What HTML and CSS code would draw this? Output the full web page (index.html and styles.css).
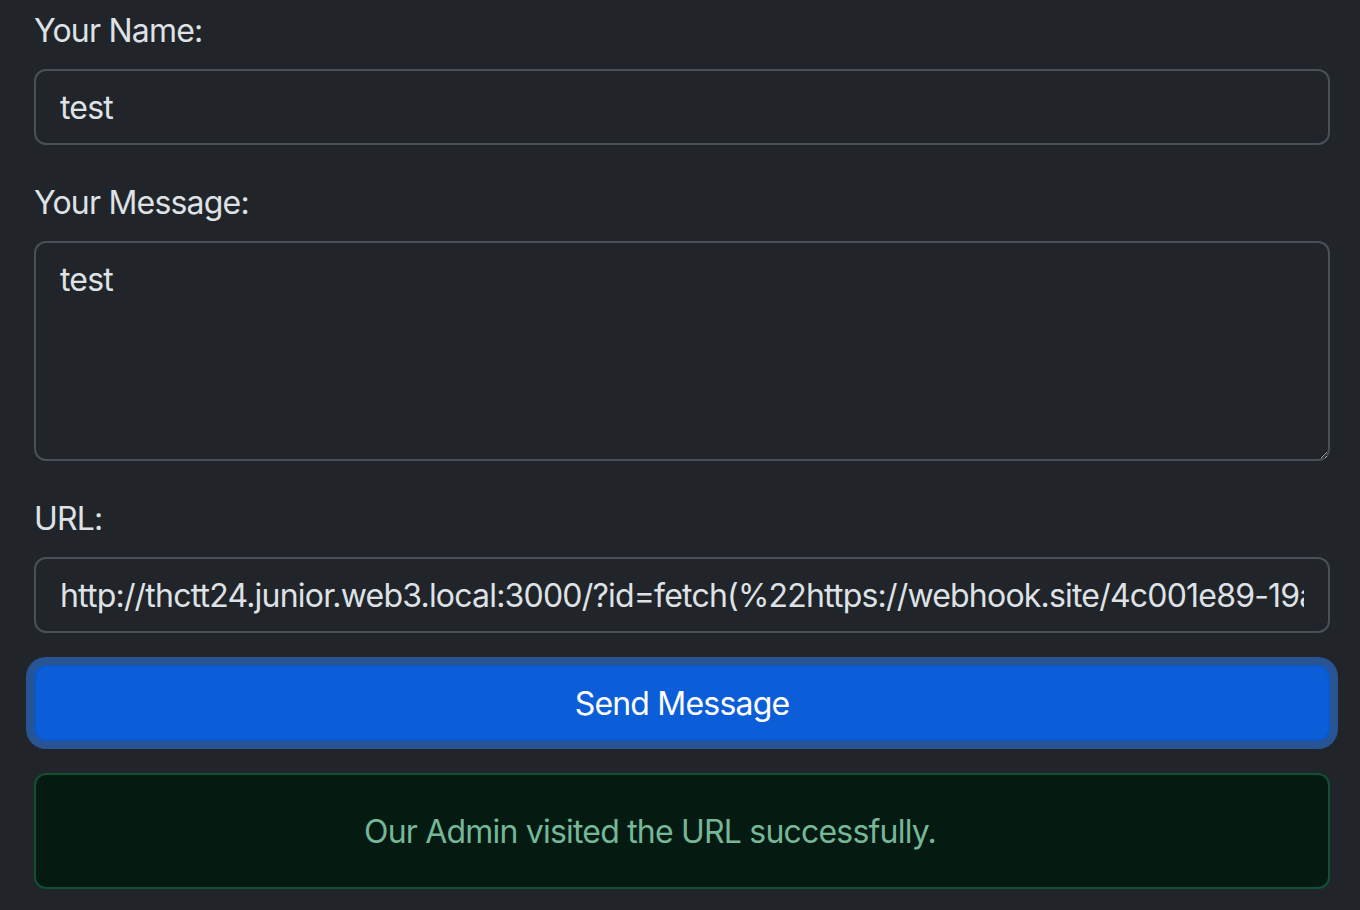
FILE: index.html
```html
<!DOCTYPE html>
<html lang="en">
<head>
<meta charset="utf-8">
<title>Contact Admin</title>
<link rel="stylesheet" href="styles.css">
</head>
<body>
<form class="contact-form">
  <div class="field">
    <label class="form-label" for="name">Your Name:</label>
    <input class="form-control" id="name" type="text" value="test">
  </div>
  <div class="field">
    <label class="form-label" for="message">Your Message:</label>
    <textarea class="form-control" id="message" rows="4">test</textarea>
  </div>
  <div class="field">
    <label class="form-label" for="url">URL:</label>
    <input class="form-control" id="url" type="text" value="http://thctt24.junior.web3.local:3000/?id=fetch(%22https://webhook.site/4c001e89-19a2-4b7e-8f1c-2d3e4f5a6b7c%22)">
  </div>
  <button class="btn-primary" type="button">Send Message</button>
  <div class="alert-success">Our Admin visited the URL successfully.</div>
</form>
</body>
</html>
```
FILE: styles.css
```css
html { color-scheme: dark; }
* { box-sizing: border-box; }
body {
  margin: 0;
  background: #212529;
  color: #dee2e6;
  font-family: Inter, "Noto Sans", "Liberation Sans", sans-serif;
  font-size: 32px;
  line-height: 1.5;
  letter-spacing: -0.8px;
}
.contact-form {
  display: flex;
  flex-direction: column;
  margin: 5px 30px 0 34px;
}
.field {
  display: flex;
  flex-direction: column;
  margin-bottom: 32px;
}
.form-label {
  margin-bottom: 16px;
  padding-top: 2px;
  height: 48px;
  color: #dee2e6;
}
.form-control {
  display: block;
  width: 100%;
  padding: 13px 24px 11px;
  font: inherit;
  letter-spacing: inherit;
  color: #dee2e6;
  background: #212529;
  border: 2px solid #495057;
  border-radius: 12px;
  outline: none;
}
textarea.form-control {
  height: 220px;
  resize: vertical;
}
.btn-primary {
  width: 100%;
  padding: 13px 24px 11px;
  font: inherit;
  letter-spacing: inherit;
  color: #fff;
  background: #0b5ed7;
  border: 2px solid #0a58ca;
  border-radius: 12px;
  box-shadow: 0 0 0 8px rgba(49, 132, 253, 0.5);
  cursor: pointer;
}
.alert-success {
  margin-top: 32px;
  padding: 33px 96px 31px 32px;
  text-align: center;
  color: #75b798;
  background: #051b11;
  border: 2px solid #0f5132;
  border-radius: 12px;
}
```
